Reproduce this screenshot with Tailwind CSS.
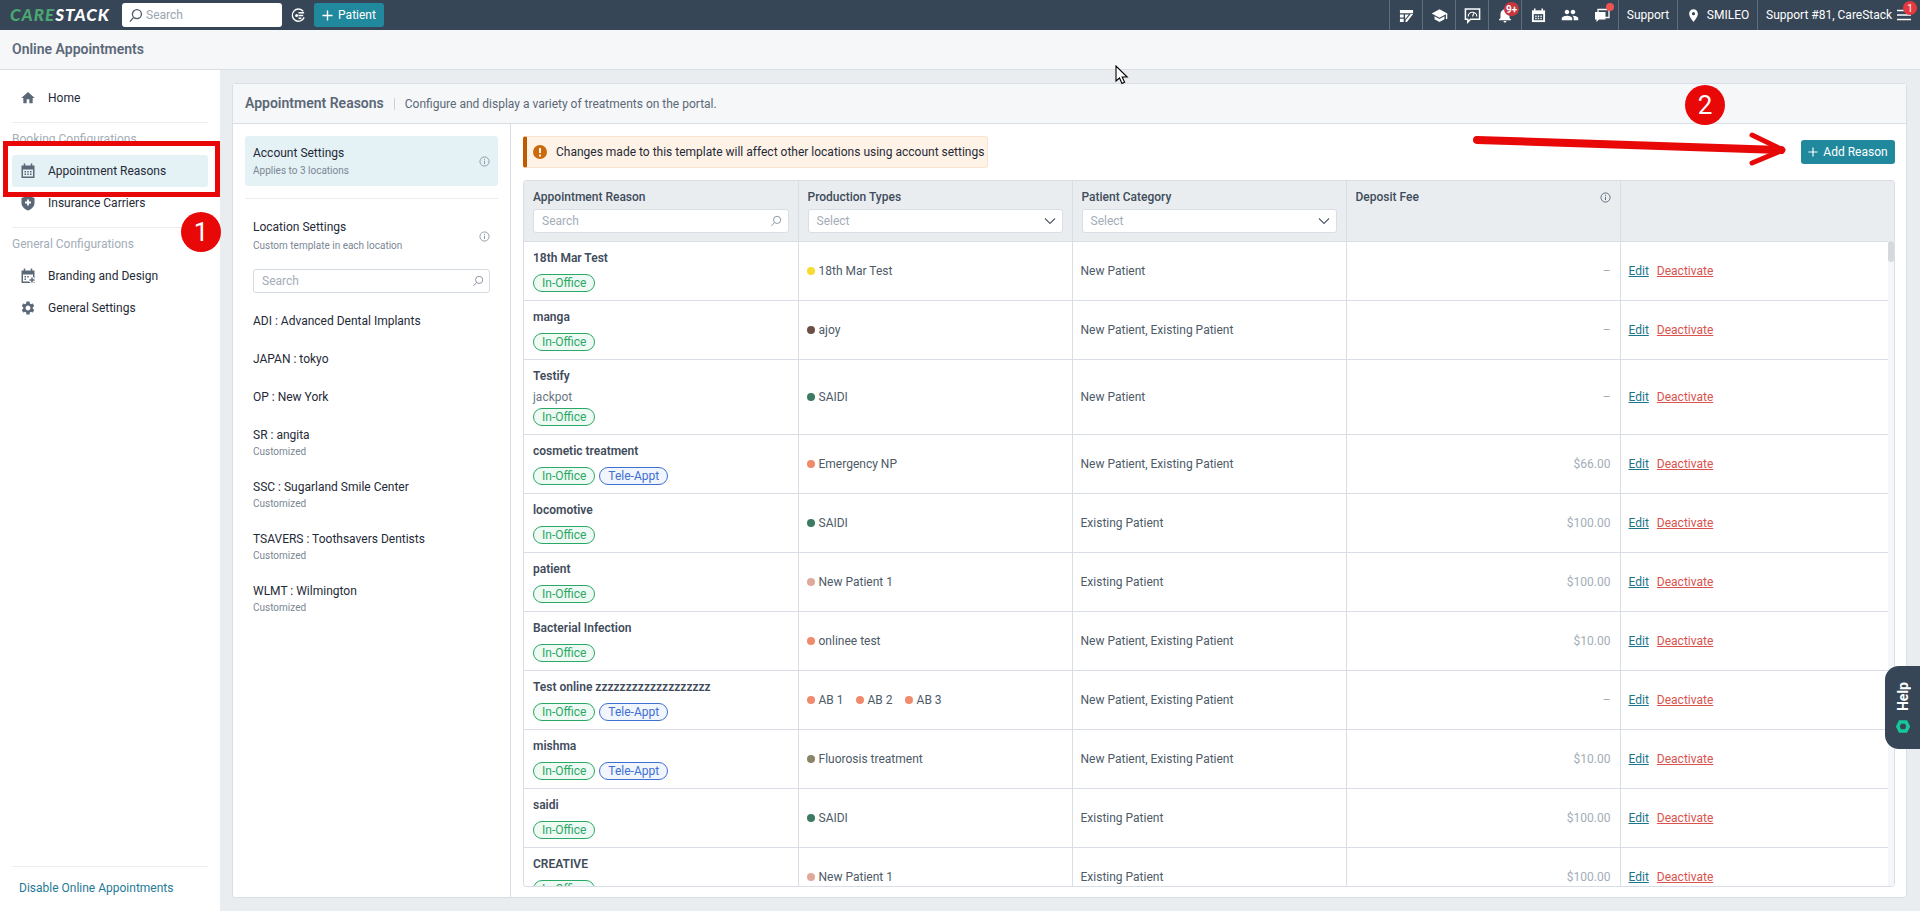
<!DOCTYPE html>
<html lang="en">
<head>
    <meta charset="UTF-8">
    <meta name="viewport" content="width=device-width, initial-scale=1.0">
    <title>Online Appointments</title>
    <script src="https://cdn.jsdelivr.net/npm/@tailwindcss/browser@4"></script>
</head>
<body class="relative h-[911px] w-[1920px] overflow-hidden bg-[#e9edf0] font-['Roboto',sans-serif] text-[12px] text-[#1f2a37]">

    <!-- Top bar -->
    <header class="flex h-[30px] items-center bg-[#364656] text-white">
        <div class="ml-[10px] w-[112px] font-['Lato',sans-serif] text-[17px] leading-[30px] font-black tracking-[1px] italic"><span class="text-[#4aa772]">CARE</span><span class="text-white">STACK</span></div>
        <div class="flex h-[24px] w-[160px] items-center gap-[3px] rounded-[3px] bg-white pl-[6px] text-[#9aa5b1]">
            <svg class="h-[15px] w-[15px]" viewBox="0 0 16 16" fill="none" stroke="#4d5a68" stroke-width="1.4"><circle cx="9.5" cy="6.5" r="4.8"/><path d="M6 10l-4 4.5"/></svg>
            <span>Search</span>
        </div>
        <svg class="ml-[9px] h-[15px] w-[15px]" viewBox="0 0 16 16" fill="none" stroke="white" stroke-width="1.5"><path d="M13 3.5A6.5 6.5 0 1 0 14 10"/><path d="M8 5h6M8 8h5M8 11h3"/><circle cx="6" cy="8" r="1.6" fill="white" stroke="none"/></svg>
        <button class="ml-[8px] flex h-[24px] w-[70px] items-center justify-center gap-[5px] rounded-[3px] bg-[#21899e]">
            <svg class="h-[11px] w-[11px]" viewBox="0 0 12 12" stroke="white" stroke-width="1.5"><path d="M6 0.5v11M0.5 6h11"/></svg>
            Patient
        </button>

        <div class="ml-auto flex h-full items-center">
            <div class="flex h-full w-[33px] items-center justify-center border-l border-[#5f6f7f]">
                <svg class="h-[15px] w-[15px]" viewBox="0 0 16 16" fill="white"><path d="M1 2h14v3.5H1zM1 7h4v3H1zM1 11.5h4V15H1zM6.5 7h4l-4 5zM15 6.5L8.5 15H7l0-2 5.5-6.5z"/></svg>
            </div>
            <div class="flex h-full w-[33px] items-center justify-center border-l border-[#5f6f7f]">
                <svg class="h-[17px] w-[17px]" viewBox="0 0 24 24" fill="white"><path d="M5 13.18v4L12 21l7-3.82v-4L12 17l-7-3.82zM12 3L1 9l11 6 9-4.91V17h2V9L12 3z"/></svg>
            </div>
            <div class="flex h-full w-[33px] items-center justify-center border-l border-[#5f6f7f]">
                <svg class="h-[17px] w-[17px]" viewBox="0 0 18 18" fill="none" stroke="white"><path d="M1.5 2h15v11H7l-3 3v-3H1.5z" fill="#364656" stroke-width="1.6"/><path d="M4.5 10a4.5 4.5 0 0 1 9 0" stroke-width="1.2"/><path d="M9 10l1.5-3.5" stroke-width="1.2"/></svg>
            </div>
            <div class="relative flex h-full w-[33px] items-center justify-center border-l border-[#5f6f7f]">
                <svg class="h-[18px] w-[18px]" viewBox="0 0 24 24" fill="white"><path d="M12 22c1.1 0 2-.9 2-2h-4c0 1.1.9 2 2 2zm6-6v-5c0-3.07-1.63-5.64-4.5-6.32V4c0-.83-.67-1.5-1.5-1.5s-1.5.67-1.5 1.5v.68C7.64 5.36 6 7.92 6 11v5l-2 2v1h16v-1l-2-2z"/></svg>
                <span class="absolute top-[2px] left-[15px] flex h-[14px] w-[15px] items-center justify-center rounded-full bg-[#c4373f] text-[10px] font-bold">9+</span>
            </div>
            <div class="flex h-full w-[33px] items-center justify-center border-l border-[#5f6f7f]">
                <svg class="h-[15px] w-[15px]" viewBox="0 0 16 16"><path d="M1 2.5h14V15H1z" fill="white"/><path d="M4 0.5v3M12 0.5v3" stroke="white" stroke-width="1.6"/><path d="M3 6.5h10V13H3z" fill="#364656"/><path d="M4.5 8h1.5v1.5H4.5zM7.2 8h1.5v1.5H7.2zM10 8h1.5v1.5H10zM4.5 10.5h1.5V12H4.5zM7.2 10.5h1.5V12H7.2zM10 10.5h1.5V12H10z" fill="white"/></svg>
            </div>
            <div class="flex h-full w-[32px] items-center justify-center">
                <svg class="h-[18px] w-[18px]" viewBox="0 0 24 24" fill="white"><path d="M16 11c1.66 0 2.99-1.34 2.99-3S17.66 5 16 5c-1.66 0-3 1.34-3 3s1.34 3 3 3zm-8 0c1.66 0 2.99-1.34 2.99-3S9.66 5 8 5C6.34 5 5 6.34 5 8s1.34 3 3 3zm0 2c-2.33 0-7 1.17-7 3.5V19h14v-2.5c0-2.33-4.67-3.5-7-3.5zm8 0c-.29 0-.62.02-.97.05 1.16.84 1.97 1.97 1.97 3.45V19h6v-2.5c0-2.33-4.67-3.5-7-3.5z"/></svg>
            </div>
            <div class="relative flex h-full w-[32px] items-center justify-center">
                <svg class="h-[16px] w-[16px]" viewBox="0 0 16 16"><path d="M4 2.5h11v8H4z" fill="none" stroke="white" stroke-width="1.3"/><path d="M1 5h10.5v7.5H5l-2.5 2.5v-2.5H1z" fill="white"/></svg>
                <span class="absolute top-[3px] right-[4px] h-[8px] w-[8px] rounded-full bg-[#ef5350]"></span>
            </div>
            <div class="flex h-full w-[59px] items-center justify-center border-l border-[#5f6f7f]">Support</div>
            <div class="flex h-full w-[80px] items-center justify-center gap-[6px] border-l border-[#5f6f7f]">
                <svg class="h-[15px] w-[15px]" viewBox="0 0 24 24" fill="white"><path d="M12 2C8.13 2 5 5.13 5 9c0 5.25 7 13 7 13s7-7.75 7-13c0-3.87-3.13-7-7-7zm0 9.5a2.5 2.5 0 110-5 2.5 2.5 0 010 5z"/></svg>
                SMILEO
            </div>
            <div class="relative flex h-full w-[163px] items-center border-l border-[#5f6f7f] pl-[8px] whitespace-nowrap">
                Support #81, CareStack
                <svg class="ml-[5px] h-[14px] w-[14px]" viewBox="0 0 14 14" stroke="white" stroke-width="1.7"><path d="M0 2.5h14M0 7h14M0 11.5h14"/></svg>
                <span class="absolute top-[1px] right-[3px] flex h-[14px] w-[14px] items-center justify-center rounded-full bg-[#e5383f] text-[10px]">1</span>
            </div>
        </div>
    </header>

    <!-- Page title -->
    <div class="flex h-[40px] items-center border-b border-[#d9dee4] bg-[#f6f7f9] pl-[12px] text-[14px] font-semibold text-[#5b6878]">Online Appointments</div>

    <div class="flex h-[841px]">
        <!-- Sidebar -->
        <aside class="flex w-[220px] flex-col bg-white px-[12px]">
            <a class="mt-[12px] flex h-[32px] items-center gap-[12px] pl-[8px]">
                <svg class="h-[16px] w-[16px] fill-[#5b6878]" viewBox="0 0 24 24"><path d="M10 20v-6h4v6h5v-8h3L12 3 2 12h3v8z"/></svg>
                Home
            </a>
            <div class="mt-[8px] border-t border-[#ebedf0]"></div>
            <div class="mt-[8px] h-[24px] leading-[16px] text-[#a3adb8]">Booking Configurations</div>
            <a class="flex h-[32px] items-center gap-[12px] rounded-[3px] bg-[#e4f1f5] pl-[8px]">
                <svg class="h-[16px] w-[16px]" viewBox="0 0 16 16"><path d="M1.5 2.5h13V15h-13z" fill="#5b6878"/><path d="M4.5 0.5v3M11.5 0.5v3" stroke="#5b6878" stroke-width="1.5"/><path d="M3 6.5h10V13.5H3z" fill="#e4f1f5"/><path d="M4.5 8h1.5v1.5H4.5zM7.2 8h1.5v1.5H7.2zM10 8h1.5v1.5H10zM4.5 10.5h1.5V12H4.5zM7.2 10.5h1.5V12H7.2zM10 10.5h1.5V12H10z" fill="#5b6878"/></svg>
                Appointment Reasons
            </a>
            <a class="flex h-[32px] items-center gap-[12px] pl-[8px]">
                <svg class="h-[16px] w-[16px]" viewBox="0 0 16 16"><path d="M8 0.5l6.5 2.5v5c0 3.5-2.8 6.3-6.5 7.5-3.7-1.2-6.5-4-6.5-7.5V3z" fill="#5b6878"/><path d="M8 4.5v6M5 7.5h6" stroke="white" stroke-width="1.8"/></svg>
                Insurance Carriers
            </a>
            <div class="mt-[8px] border-t border-[#ebedf0]"></div>
            <div class="mt-[8px] h-[24px] leading-[17px] text-[#a3adb8]">General Configurations</div>
            <a class="flex h-[32px] items-center gap-[12px] pl-[8px]">
                <svg class="h-[16px] w-[16px]" viewBox="0 0 16 16"><path d="M1.5 2.5h13v12.5h-13z" fill="#5b6878"/><path d="M4.5 0.5v3M11.5 0.5v3" stroke="#5b6878" stroke-width="1.5"/><path d="M3 6.5h10v7H3z" fill="white"/><path d="M4.5 8h1.5v1.5H4.5zM7.2 8h1.5v1.5H7.2zM4.5 10.5h1.5V12H4.5z" fill="#5b6878"/><path d="M12 9v6M9 12h6" stroke="white" stroke-width="3.4"/><path d="M12 9.5v5M9.5 12h5" stroke="#5b6878" stroke-width="1.5"/></svg>
                Branding and Design
            </a>
            <a class="flex h-[32px] items-center gap-[12px] pl-[8px]">
                <svg class="h-[16px] w-[16px] fill-[#5b6878]" viewBox="0 0 24 24"><path d="M19.14 12.94c.04-.3.06-.61.06-.94 0-.32-.02-.64-.07-.94l2.03-1.58c.18-.14.23-.41.12-.61l-1.92-3.32c-.12-.22-.37-.29-.59-.22l-2.39.96c-.5-.38-1.03-.7-1.62-.94l-.36-2.54c-.04-.24-.24-.41-.48-.41h-3.84c-.24 0-.43.17-.47.41l-.36 2.54c-.59.24-1.13.57-1.62.94l-2.39-.96c-.22-.08-.47 0-.59.22L2.74 8.87c-.12.21-.08.47.12.61l2.03 1.58c-.05.3-.09.63-.09.94s.02.64.07.94l-2.03 1.58c-.18.14-.23.41-.12.61l1.92 3.32c.12.22.37.29.59.22l2.39-.96c.5.38 1.03.7 1.62.94l.36 2.54c.05.24.24.41.48.41h3.84c.24 0 .44-.17.47-.41l.36-2.54c.59-.24 1.13-.56 1.62-.94l2.39.96c.22.08.47 0 .59-.22l1.92-3.32c.12-.22.07-.47-.12-.61l-2.01-1.58zM12 15.6c-1.98 0-3.6-1.62-3.6-3.6s1.62-3.6 3.6-3.6 3.6 1.62 3.6 3.6-1.62 3.6-3.6 3.6z"/></svg>
                General Settings
            </a>
            <div class="mt-auto h-[45px] border-t border-[#ebedf0] pt-[13px] pl-[7px] leading-[16px] text-[#1f7a96]">Disable Online Appointments</div>
        </aside>

        <!-- Main card -->
        <main class="mt-[13px] ml-[12px] flex h-[815px] w-[1675px] flex-col rounded-[3px] border border-[#d9dee6] bg-white">
            <div class="flex h-[40px] flex-none items-center border-b border-[#d9dee6] bg-[#f6f7f9] pl-[12px]">
                <span class="text-[14px] font-semibold text-[#5b6878]">Appointment Reasons</span>
                <span class="mx-[10px] h-[12px] border-l border-[#ccd3da]"></span>
                <span class="text-[#5b6878]">Configure and display a variety of treatments on the portal.</span>
            </div>

            <div class="flex min-h-0 flex-1">
                <!-- Settings list -->
                <div class="w-[278px] flex-none border-r border-[#d9dee6] px-[12px] pt-[12px]">
                    <div class="flex h-[50px] items-center justify-between rounded-[3px] bg-[#e4f1f5] pr-[8px] pl-[8px]">
                        <div>
                            <div class="leading-[16px]">Account Settings</div>
                            <div class="mt-[3px] text-[10px] leading-[14px] text-[#7b8794]">Applies to 3 locations</div>
                        </div>
                        <svg class="h-[11px] w-[11px]" viewBox="0 0 12 12" fill="none" stroke="#8a96a3"><circle cx="6" cy="6" r="5"/><path d="M6 5.2v3.6M6 3v1.2"/></svg>
                    </div>
                    <div class="mt-[12px] border-t border-[#ebedf0]"></div>
                    <div class="mt-[20px] flex items-center justify-between pr-[8px] pl-[8px]">
                        <div>
                            <div class="leading-[16px]">Location Settings</div>
                            <div class="mt-[4px] text-[10px] leading-[14px] text-[#7b8794]">Custom template in each location</div>
                        </div>
                        <svg class="h-[11px] w-[11px]" viewBox="0 0 12 12" fill="none" stroke="#8a96a3"><circle cx="6" cy="6" r="5"/><path d="M6 5.2v3.6M6 3v1.2"/></svg>
                    </div>
                    <div class="mt-[16px] mr-[8px] ml-[8px] flex h-[24px] items-center justify-between rounded-[3px] border border-[#d5dbe2] pr-[5px] pl-[8px] text-[#a3adb8]">
                        Search
                        <svg class="h-[12px] w-[12px]" viewBox="0 0 16 16" fill="none" stroke="#8a96a3" stroke-width="1.3"><circle cx="9.5" cy="6.5" r="4.8"/><path d="M6 10l-4 4.5"/></svg>
                    </div>
                    <div class="mt-[20px] pl-[8px]">
                        <div class="h-[38px] leading-[16px]">ADI : Advanced Dental Implants</div>
                        <div class="h-[38px] leading-[16px]">JAPAN : tokyo</div>
                        <div class="h-[38px] leading-[16px]">OP : New York</div>
                        <div class="h-[52px] leading-[16px]">SR : angita<div class="mt-[2px] text-[10px] leading-[14px] text-[#7b8794]">Customized</div></div>
                        <div class="h-[52px] leading-[16px]">SSC : Sugarland Smile Center<div class="mt-[2px] text-[10px] leading-[14px] text-[#7b8794]">Customized</div></div>
                        <div class="h-[52px] leading-[16px]">TSAVERS : Toothsavers Dentists<div class="mt-[2px] text-[10px] leading-[14px] text-[#7b8794]">Customized</div></div>
                        <div class="h-[52px] leading-[16px]">WLMT : Wilmington<div class="mt-[2px] text-[10px] leading-[14px] text-[#7b8794]">Customized</div></div>
                    </div>
                </div>

                <!-- Table side -->
                <div class="min-w-0 flex-1 pt-[12px] pr-[11px] pl-[12px]">
                    <div class="flex h-[32px] items-start justify-between">
                        <div class="flex h-[32px] w-[465px] items-center rounded-[3px] border border-l-4 border-[#fbe3cd] border-l-[#c05a00] bg-[#fff3e8] pl-[6px]">
                            <svg class="h-[14px] w-[14px]" viewBox="0 0 14 14"><circle cx="7" cy="7" r="7" fill="#c96a0c"/><path d="M7 3v5M7 9.5v2" stroke="white" stroke-width="1.8"/></svg>
                            <span class="ml-[9px]">Changes made to this template will affect other locations using account settings</span>
                        </div>
                        <button class="mt-[4px] flex h-[24px] w-[94px] items-center justify-center gap-[5px] rounded-[3px] bg-[#21899e] text-white">
                            <svg class="h-[10px] w-[10px]" viewBox="0 0 12 12" stroke="white" stroke-width="1.4"><path d="M6 0.5v11M0.5 6h11"/></svg>
                            Add Reason
                        </button>
                    </div>

                    <div class="relative mt-[12px] h-[707px] overflow-hidden rounded-[3px] border border-[#d9dee6]">
                        <table class="w-full table-fixed border-collapse">
                            <colgroup><col class="w-[274px]"><col class="w-[274px]"><col class="w-[274px]"><col class="w-[274px]"><col class="w-[274px]"></colgroup>
                            <thead class="bg-[#e9edf0] text-left text-[#3f4c5b]">
                                <tr class="h-[60px] border-b border-[#d9dee6]">
                                    <th class="border-r border-[#d9dee6] px-[9px] align-top font-medium">
                                        <div class="mt-[8px] leading-[16px]">Appointment Reason</div>
                                        <div class="mt-[4px] flex h-[24px] items-center justify-between rounded-[3px] border border-[#d9dee6] bg-white pr-[6px] pl-[8px] font-normal text-[#a3adb8]">Search
                                            <svg class="h-[12px] w-[12px]" viewBox="0 0 16 16" fill="none" stroke="#8a96a3" stroke-width="1.3"><circle cx="9.5" cy="6.5" r="4.8"/><path d="M6 10l-4 4.5"/></svg>
                                        </div>
                                    </th>
                                    <th class="border-r border-[#d9dee6] px-[9px] align-top font-medium">
                                        <div class="mt-[8px] leading-[16px]">Production Types</div>
                                        <div class="mt-[4px] flex h-[24px] items-center justify-between rounded-[3px] border border-[#d9dee6] bg-white pr-[6px] pl-[8px] font-normal text-[#a3adb8]">Select
                                            <svg class="h-[12px] w-[12px]" viewBox="0 0 12 12" fill="none" stroke="#4d5a68" stroke-width="1.1"><path d="M1 3.5l5 5 5-5"/></svg>
                                        </div>
                                    </th>
                                    <th class="border-r border-[#d9dee6] px-[9px] align-top font-medium">
                                        <div class="mt-[8px] leading-[16px]">Patient Category</div>
                                        <div class="mt-[4px] flex h-[24px] items-center justify-between rounded-[3px] border border-[#d9dee6] bg-white pr-[6px] pl-[8px] font-normal text-[#a3adb8]">Select
                                            <svg class="h-[12px] w-[12px]" viewBox="0 0 12 12" fill="none" stroke="#4d5a68" stroke-width="1.1"><path d="M1 3.5l5 5 5-5"/></svg>
                                        </div>
                                    </th>
                                    <th class="border-r border-[#d9dee6] px-[9px] align-top font-medium">
                                        <div class="mt-[8px] flex items-center justify-between leading-[16px]">Deposit Fee
                                            <svg class="h-[11px] w-[11px]" viewBox="0 0 12 12" fill="none" stroke="#5b6878"><circle cx="6" cy="6" r="5"/><path d="M6 5.2v3.6M6 3v1.2"/></svg>
                                        </div>
                                    </th>
                                    <th></th>
                                </tr>
                            </thead>
                            <tbody class="text-[#4d5a68]">
                                <tr class="h-[59px] border-b border-[#d9dee6]">
                                    <td class="border-r border-[#d9dee6] px-[9px] align-top"><div class="mt-[8px] leading-[16px] font-semibold text-[#3f4c5b]">18th Mar Test</div><div class="mt-[8px] flex gap-[4px]"><span class="h-[18px] rounded-full border border-[#2aa866] bg-[#eefaf3] px-[8px] text-[12px] leading-[16px] text-[#2aa866]">In-Office</span></div></td>
                                    <td class="border-r border-[#d9dee6] px-[8px]"><span class="mr-[4px] inline-block h-[8px] w-[8px] rounded-full bg-[#f5dc2e]"></span>18th Mar Test</td>
                                    <td class="border-r border-[#d9dee6] px-[8px]">New Patient</td>
                                    <td class="border-r border-[#d9dee6] px-[9px] text-right text-[#a3adb8]">–</td>
                                    <td class="px-[8px]"><a class="text-[#1c7488] underline">Edit</a><a class="ml-[8px] text-[#d9534f] underline">Deactivate</a></td>
                                </tr>
                                <tr class="h-[59px] border-b border-[#d9dee6]">
                                    <td class="border-r border-[#d9dee6] px-[9px] align-top"><div class="mt-[8px] leading-[16px] font-semibold text-[#3f4c5b]">manga</div><div class="mt-[8px] flex gap-[4px]"><span class="h-[18px] rounded-full border border-[#2aa866] bg-[#eefaf3] px-[8px] text-[12px] leading-[16px] text-[#2aa866]">In-Office</span></div></td>
                                    <td class="border-r border-[#d9dee6] px-[8px]"><span class="mr-[4px] inline-block h-[8px] w-[8px] rounded-full bg-[#6b4f47]"></span>ajoy</td>
                                    <td class="border-r border-[#d9dee6] px-[8px]">New Patient, Existing Patient</td>
                                    <td class="border-r border-[#d9dee6] px-[9px] text-right text-[#a3adb8]">–</td>
                                    <td class="px-[8px]"><a class="text-[#1c7488] underline">Edit</a><a class="ml-[8px] text-[#d9534f] underline">Deactivate</a></td>
                                </tr>
                                <tr class="h-[75px] border-b border-[#d9dee6]">
                                    <td class="border-r border-[#d9dee6] px-[9px] align-top"><div class="mt-[8px] leading-[16px] font-semibold text-[#3f4c5b]">Testify</div><div class="mt-[5px] leading-[16px] text-[#6b7785]">jackpot</div><div class="mt-[3px] flex gap-[4px]"><span class="h-[18px] rounded-full border border-[#2aa866] bg-[#eefaf3] px-[8px] text-[12px] leading-[16px] text-[#2aa866]">In-Office</span></div></td>
                                    <td class="border-r border-[#d9dee6] px-[8px]"><span class="mr-[4px] inline-block h-[8px] w-[8px] rounded-full bg-[#3c7a62]"></span>SAIDI</td>
                                    <td class="border-r border-[#d9dee6] px-[8px]">New Patient</td>
                                    <td class="border-r border-[#d9dee6] px-[9px] text-right text-[#a3adb8]">–</td>
                                    <td class="px-[8px]"><a class="text-[#1c7488] underline">Edit</a><a class="ml-[8px] text-[#d9534f] underline">Deactivate</a></td>
                                </tr>
                                <tr class="h-[59px] border-b border-[#d9dee6]">
                                    <td class="border-r border-[#d9dee6] px-[9px] align-top"><div class="mt-[8px] leading-[16px] font-semibold text-[#3f4c5b]">cosmetic treatment</div><div class="mt-[8px] flex gap-[4px]"><span class="h-[18px] rounded-full border border-[#2aa866] bg-[#eefaf3] px-[8px] text-[12px] leading-[16px] text-[#2aa866]">In-Office</span><span class="h-[18px] rounded-full border border-[#3f6fd1] bg-[#f0f5fe] px-[8px] text-[12px] leading-[16px] text-[#3f6fd1]">Tele-Appt</span></div></td>
                                    <td class="border-r border-[#d9dee6] px-[8px]"><span class="mr-[4px] inline-block h-[8px] w-[8px] rounded-full bg-[#f08a6c]"></span>Emergency NP</td>
                                    <td class="border-r border-[#d9dee6] px-[8px]">New Patient, Existing Patient</td>
                                    <td class="border-r border-[#d9dee6] px-[9px] text-right text-[#a3adb8]">$66.00</td>
                                    <td class="px-[8px]"><a class="text-[#1c7488] underline">Edit</a><a class="ml-[8px] text-[#d9534f] underline">Deactivate</a></td>
                                </tr>
                                <tr class="h-[59px] border-b border-[#d9dee6]">
                                    <td class="border-r border-[#d9dee6] px-[9px] align-top"><div class="mt-[8px] leading-[16px] font-semibold text-[#3f4c5b]">locomotive</div><div class="mt-[8px] flex gap-[4px]"><span class="h-[18px] rounded-full border border-[#2aa866] bg-[#eefaf3] px-[8px] text-[12px] leading-[16px] text-[#2aa866]">In-Office</span></div></td>
                                    <td class="border-r border-[#d9dee6] px-[8px]"><span class="mr-[4px] inline-block h-[8px] w-[8px] rounded-full bg-[#3c7a62]"></span>SAIDI</td>
                                    <td class="border-r border-[#d9dee6] px-[8px]">Existing Patient</td>
                                    <td class="border-r border-[#d9dee6] px-[9px] text-right text-[#a3adb8]">$100.00</td>
                                    <td class="px-[8px]"><a class="text-[#1c7488] underline">Edit</a><a class="ml-[8px] text-[#d9534f] underline">Deactivate</a></td>
                                </tr>
                                <tr class="h-[59px] border-b border-[#d9dee6]">
                                    <td class="border-r border-[#d9dee6] px-[9px] align-top"><div class="mt-[8px] leading-[16px] font-semibold text-[#3f4c5b]">patient</div><div class="mt-[8px] flex gap-[4px]"><span class="h-[18px] rounded-full border border-[#2aa866] bg-[#eefaf3] px-[8px] text-[12px] leading-[16px] text-[#2aa866]">In-Office</span></div></td>
                                    <td class="border-r border-[#d9dee6] px-[8px]"><span class="mr-[4px] inline-block h-[8px] w-[8px] rounded-full bg-[#dfa99a]"></span>New Patient 1</td>
                                    <td class="border-r border-[#d9dee6] px-[8px]">Existing Patient</td>
                                    <td class="border-r border-[#d9dee6] px-[9px] text-right text-[#a3adb8]">$100.00</td>
                                    <td class="px-[8px]"><a class="text-[#1c7488] underline">Edit</a><a class="ml-[8px] text-[#d9534f] underline">Deactivate</a></td>
                                </tr>
                                <tr class="h-[59px] border-b border-[#d9dee6]">
                                    <td class="border-r border-[#d9dee6] px-[9px] align-top"><div class="mt-[8px] leading-[16px] font-semibold text-[#3f4c5b]">Bacterial Infection</div><div class="mt-[8px] flex gap-[4px]"><span class="h-[18px] rounded-full border border-[#2aa866] bg-[#eefaf3] px-[8px] text-[12px] leading-[16px] text-[#2aa866]">In-Office</span></div></td>
                                    <td class="border-r border-[#d9dee6] px-[8px]"><span class="mr-[4px] inline-block h-[8px] w-[8px] rounded-full bg-[#f08a6c]"></span>onlinee test</td>
                                    <td class="border-r border-[#d9dee6] px-[8px]">New Patient, Existing Patient</td>
                                    <td class="border-r border-[#d9dee6] px-[9px] text-right text-[#a3adb8]">$10.00</td>
                                    <td class="px-[8px]"><a class="text-[#1c7488] underline">Edit</a><a class="ml-[8px] text-[#d9534f] underline">Deactivate</a></td>
                                </tr>
                                <tr class="h-[59px] border-b border-[#d9dee6]">
                                    <td class="border-r border-[#d9dee6] px-[9px] align-top"><div class="mt-[8px] leading-[16px] font-semibold text-[#3f4c5b]">Test online zzzzzzzzzzzzzzzzzzz</div><div class="mt-[8px] flex gap-[4px]"><span class="h-[18px] rounded-full border border-[#2aa866] bg-[#eefaf3] px-[8px] text-[12px] leading-[16px] text-[#2aa866]">In-Office</span><span class="h-[18px] rounded-full border border-[#3f6fd1] bg-[#f0f5fe] px-[8px] text-[12px] leading-[16px] text-[#3f6fd1]">Tele-Appt</span></div></td>
                                    <td class="border-r border-[#d9dee6] px-[8px]"><span class="mr-[4px] inline-block h-[8px] w-[8px] rounded-full bg-[#f08a6c]"></span>AB 1<span class="mr-[4px] ml-[12px] inline-block h-[8px] w-[8px] rounded-full bg-[#f08a6c]"></span>AB 2<span class="mr-[4px] ml-[12px] inline-block h-[8px] w-[8px] rounded-full bg-[#f08a6c]"></span>AB 3</td>
                                    <td class="border-r border-[#d9dee6] px-[8px]">New Patient, Existing Patient</td>
                                    <td class="border-r border-[#d9dee6] px-[9px] text-right text-[#a3adb8]">–</td>
                                    <td class="px-[8px]"><a class="text-[#1c7488] underline">Edit</a><a class="ml-[8px] text-[#d9534f] underline">Deactivate</a></td>
                                </tr>
                                <tr class="h-[59px] border-b border-[#d9dee6]">
                                    <td class="border-r border-[#d9dee6] px-[9px] align-top"><div class="mt-[8px] leading-[16px] font-semibold text-[#3f4c5b]">mishma</div><div class="mt-[8px] flex gap-[4px]"><span class="h-[18px] rounded-full border border-[#2aa866] bg-[#eefaf3] px-[8px] text-[12px] leading-[16px] text-[#2aa866]">In-Office</span><span class="h-[18px] rounded-full border border-[#3f6fd1] bg-[#f0f5fe] px-[8px] text-[12px] leading-[16px] text-[#3f6fd1]">Tele-Appt</span></div></td>
                                    <td class="border-r border-[#d9dee6] px-[8px]"><span class="mr-[4px] inline-block h-[8px] w-[8px] rounded-full bg-[#8a8468]"></span>Fluorosis treatment</td>
                                    <td class="border-r border-[#d9dee6] px-[8px]">New Patient, Existing Patient</td>
                                    <td class="border-r border-[#d9dee6] px-[9px] text-right text-[#a3adb8]">$10.00</td>
                                    <td class="px-[8px]"><a class="text-[#1c7488] underline">Edit</a><a class="ml-[8px] text-[#d9534f] underline">Deactivate</a></td>
                                </tr>
                                <tr class="h-[59px] border-b border-[#d9dee6]">
                                    <td class="border-r border-[#d9dee6] px-[9px] align-top"><div class="mt-[8px] leading-[16px] font-semibold text-[#3f4c5b]">saidi</div><div class="mt-[8px] flex gap-[4px]"><span class="h-[18px] rounded-full border border-[#2aa866] bg-[#eefaf3] px-[8px] text-[12px] leading-[16px] text-[#2aa866]">In-Office</span></div></td>
                                    <td class="border-r border-[#d9dee6] px-[8px]"><span class="mr-[4px] inline-block h-[8px] w-[8px] rounded-full bg-[#3c7a62]"></span>SAIDI</td>
                                    <td class="border-r border-[#d9dee6] px-[8px]">Existing Patient</td>
                                    <td class="border-r border-[#d9dee6] px-[9px] text-right text-[#a3adb8]">$100.00</td>
                                    <td class="px-[8px]"><a class="text-[#1c7488] underline">Edit</a><a class="ml-[8px] text-[#d9534f] underline">Deactivate</a></td>
                                </tr>
                                <tr class="h-[59px] border-b border-[#d9dee6]">
                                    <td class="border-r border-[#d9dee6] px-[9px] align-top"><div class="mt-[8px] leading-[16px] font-semibold text-[#3f4c5b]">CREATIVE</div><div class="mt-[8px] flex gap-[4px]"><span class="h-[18px] rounded-full border border-[#2aa866] bg-[#eefaf3] px-[8px] text-[12px] leading-[16px] text-[#2aa866]">In-Office</span></div></td>
                                    <td class="border-r border-[#d9dee6] px-[8px]"><span class="mr-[4px] inline-block h-[8px] w-[8px] rounded-full bg-[#dfa99a]"></span>New Patient 1</td>
                                    <td class="border-r border-[#d9dee6] px-[8px]">Existing Patient</td>
                                    <td class="border-r border-[#d9dee6] px-[9px] text-right text-[#a3adb8]">$100.00</td>
                                    <td class="px-[8px]"><a class="text-[#1c7488] underline">Edit</a><a class="ml-[8px] text-[#d9534f] underline">Deactivate</a></td>
                                </tr>
                            </tbody>
                        </table>
                        <!-- Scrollbar -->
                        <div class="absolute top-[60px] right-0 bottom-0 w-[6px] bg-[#f5f6f8]"><div class="h-[21px] rounded-full bg-[#d5d9de]"></div></div>
                    </div>
                </div>
            </div>
        </main>
    </div>

    <!-- Help tab -->
    <div class="absolute top-[666px] right-0 flex h-[83px] w-[35px] flex-col items-center justify-center gap-[8px] rounded-l-[14px] bg-[#364656] text-white">
        <span class="rotate-180 text-[14px] leading-none font-bold [writing-mode:vertical-rl]">Help</span>
        <svg class="h-[13px] w-[14px]" viewBox="0 0 14 13" fill="none" stroke="#16c79a" stroke-width="3.4"><path d="M4 2h6l2.2 4.5L10 11H4L1.8 6.5z"/></svg>
    </div>

    <!-- Tutorial annotations -->
    <div class="absolute top-[141px] left-[3px] h-[56px] w-[217px] border-[5px] border-[#e80808]"></div>
    <div class="absolute top-[212px] left-[181px] flex h-[40px] w-[40px] items-center justify-center rounded-full bg-[#e80808] text-[26px] text-white">1</div>
    <div class="absolute top-[85px] left-[1685px] flex h-[40px] w-[40px] items-center justify-center rounded-full bg-[#e80808] text-[26px] text-white">2</div>
    <svg class="absolute top-[125px] left-[1465px] h-[50px] w-[330px]" viewBox="0 0 330 50" fill="none" stroke="#e80808" stroke-linecap="round" stroke-linejoin="round">
        <path d="M12 15L316 25" stroke-width="8"/>
        <path d="M287 10L318 25L287 38" stroke-width="5"/>
    </svg>
    <svg class="absolute top-[65px] left-[1115px] h-[20px] w-[15px]" viewBox="0 0 15 20">
        <path d="M1 1v15l3.5-3 2.5 5.5 2.6-1.2-2.4-5.3h5z" fill="white" stroke="black" stroke-width="1.1"/>
    </svg>
</body>
</html>
